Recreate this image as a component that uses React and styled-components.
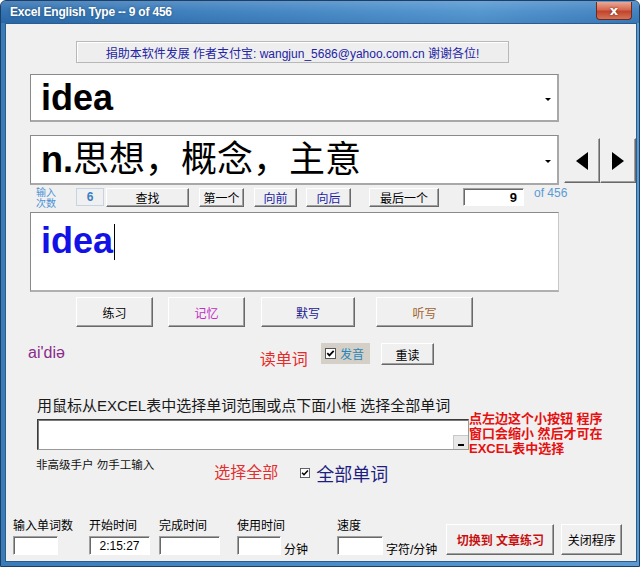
import React from "react";
import styled, { createGlobalStyle, css } from "styled-components";

const Global = createGlobalStyle`
  html, body { margin: 0; padding: 0; background: #fff; }
  body { font-family: "Liberation Sans", "Noto Sans CJK SC", sans-serif; }
  * { box-sizing: border-box; }
`;

const CJK = `"Liberation Sans", "Noto Sans CJK SC", sans-serif`;

const Win = styled.div`
  width: 640px;
  height: 567px;
  display: flex;
  flex-direction: column;
  background: linear-gradient(90deg, #3a7bb9 0%, #4d8fca 60%, #5c9bd2 100%);
  border: 1px solid #1d3f66;
  border-radius: 6px 6px 0 0;
  overflow: hidden;
`;

const TitleBar = styled.div`
  height: 22px;
  flex: none;
  display: flex;
  align-items: center;
  justify-content: space-between;
  padding: 0 7px 0 9px;
  background:
    linear-gradient(180deg, rgba(255,255,255,0.18) 0%, rgba(255,255,255,0.05) 45%, rgba(0,0,0,0.05) 100%),
    linear-gradient(90deg, #2a6cae 0%, #3c80c0 40%, #4f93cf 75%, #3a7dbd 100%);
`;

const Title = styled.span`
  color: #fff;
  font: bold 12px "Liberation Sans", sans-serif;
  letter-spacing: -0.2px;
  text-shadow: 0 0 3px rgba(0,0,0,0.35);
`;

const CloseBtn = styled.div`
  width: 36px;
  height: 18px;
  margin-top: -3px;
  border: 1px solid #6b2a22;
  border-top: none;
  border-radius: 0 0 4px 4px;
  background: linear-gradient(180deg, #e8a897 0%, #d8694f 45%, #c0452d 55%, #d57356 100%);
  display: flex;
  align-items: center;
  justify-content: center;
  color: #fff;
  font: bold 13px "DejaVu Sans", sans-serif;
  text-shadow: 0 0 2px #5a1a10;
`;

const Frame = styled.div`
  flex: 1;
  display: flex;
  padding: 0 4px 4px 4px;
`;

const Client = styled.div`
  flex: 1;
  background: #f0f0f0;
  border: 1px solid #2c5b8e;
  display: flex;
  flex-direction: column;
  font-family: ${CJK};
`;

const Row = styled.div`
  display: flex;
  align-items: ${(p) => p.$align || "flex-start"};
  margin-top: ${(p) => p.$mt || 0}px;
  padding-left: ${(p) => p.$pl || 0}px;
`;

const Banner = styled.div`
  width: 433px;
  height: 22px;
  border: 1px solid #b8b8b8;
  background: #eeeeee;
  box-shadow: inset 1px 1px 0 #fff;
  display: flex;
  align-items: center;
  justify-content: center;
  color: #2323a5;
  font-size: 12px;
`;

const sunken = css`
  background: #fff;
  border-top: 1px solid #a0a0a0;
  border-left: 1px solid #a0a0a0;
  border-right: 1px solid #fff;
  border-bottom: 1px solid #fff;
  box-shadow: inset 1px 1px 0 #696969;
`;

const raised = css`
  background: #f0f0f0;
  border-top: 1px solid #fff;
  border-left: 1px solid #fff;
  border-right: 1px solid #696969;
  border-bottom: 1px solid #696969;
  box-shadow: inset -1px -1px 0 #a0a0a0;
`;

const Combo = styled.div`
  width: 529px;
  height: ${(p) => p.$h}px;
  background: #fff;
  border-top: 1px solid #8a8a8a;
  border-left: 1px solid #8a8a8a;
  border-right: 2px solid #a8a8a8;
  border-bottom: 2px solid #a8a8a8;
  display: flex;
  align-items: center;
  padding: 0 6px 0 10px;
`;

const ComboText = styled.div`
  flex: 1;
  font-size: 36px;
  font-weight: ${(p) => (p.$bold ? 700 : 400)};
  color: #000;
  line-height: 1;
  white-space: nowrap;
  font-family: ${CJK};
`;

const Bold = styled.span`
  font-weight: 700;
`;

const DropArrow = styled.div`
  width: 0;
  height: 0;
  border-left: 3px solid transparent;
  border-right: 3px solid transparent;
  border-top: 3px solid #000;
  margin-top: 4px;
`;

const ArrowGroup = styled.div`
  display: flex;
  margin-left: 5px;
  margin-top: 3px;
  height: 45px;
`;

const ArrowBtn = styled.div`
  ${raised};
  width: 36px;
  height: 45px;
  display: flex;
  align-items: center;
  justify-content: center;
  border-top-color: #f0f0f0;
  border-left-color: #f0f0f0;
`;

const Tri = styled.div`
  width: 0;
  height: 0;
  border-top: 9px solid transparent;
  border-bottom: 9px solid transparent;
  ${(p) =>
    p.$dir === "left"
      ? css`border-right: 12px solid #000;`
      : css`border-left: 12px solid #000;`}
`;

const TinyLabel = styled.div`
  color: #4b92d6;
  font-size: 10px;
  line-height: 11px;
  width: 24px;
  margin-left: ${(p) => p.$ml || 0}px;
  margin-top: -1px;
`;

const CountBox = styled.div`
  width: 28px;
  height: 18px;
  margin-left: ${(p) => p.$ml || 0}px;
  border: 1px solid #c4d4e4;
  background: #f0f0f0;
  color: #3a7fc6;
  font: bold 12px "Liberation Sans", sans-serif;
  display: flex;
  align-items: center;
  justify-content: center;
`;

const Btn = styled.div`
  ${raised};
  width: ${(p) => p.$w}px;
  height: ${(p) => p.$h || 19}px;
  margin-left: ${(p) => p.$ml || 0}px;
  margin-top: ${(p) => p.$mt || 0}px;
  display: flex;
  align-items: center;
  justify-content: center;
  font-size: 12px;
  font-weight: ${(p) => (p.$bold ? 700 : 400)};
  color: ${(p) => p.$color || "#000"};
  flex: none;
`;

const NumInput = styled.div`
  ${sunken};
  width: 61px;
  height: 18px;
  margin-left: ${(p) => p.$ml || 0}px;
  display: flex;
  align-items: center;
  justify-content: flex-end;
  padding-right: 6px;
  font: bold 13px "Liberation Sans", sans-serif;
  color: #000;
`;

const OfText = styled.div`
  margin-left: ${(p) => p.$ml || 0}px;
  color: #5b9bd5;
  font: 12px "Liberation Sans", sans-serif;
  margin-top: -2px;
`;

const TextArea = styled.div`
  width: 529px;
  height: 80px;
  background: #fff;
  border-top: 1px solid #8a8a8a;
  border-left: 1px solid #8a8a8a;
  border-right: 1px solid #c8c8c8;
  border-bottom: 2px solid #b0b0b0;
  padding: 8px 0 0 10px;
  display: flex;
  align-items: flex-start;
`;

const TypedWord = styled.span`
  color: #1212e6;
  font: bold 36px "Liberation Sans", sans-serif;
  line-height: 40px;
`;

const Caret = styled.span`
  display: inline-block;
  width: 1px;
  height: 36px;
  margin-top: 3px;
  margin-left: 1px;
  background: #000;
`;

const Text = styled.div`
  color: ${(p) => p.$color || "#000"};
  font-size: ${(p) => p.$size || 12}px;
  font-weight: ${(p) => (p.$bold ? 700 : 400)};
  margin-left: ${(p) => p.$ml || 0}px;
  margin-top: ${(p) => p.$mt || 0}px;
  line-height: ${(p) => p.$lh || "normal"};
  white-space: nowrap;
  font-family: ${(p) => (p.$latin ? `"Liberation Sans", "DejaVu Sans", sans-serif` : CJK)};
`;

const CheckGroup = styled.div`
  display: flex;
  align-items: center;
  gap: 4px;
  margin-left: ${(p) => p.$ml || 0}px;
  margin-top: ${(p) => p.$mt || 0}px;
  padding: ${(p) => (p.$shaded ? "0 6px 0 4px" : "0")};
  height: ${(p) => (p.$shaded ? "21px" : "auto")};
  background: ${(p) => (p.$shaded ? "#d4d0c8" : "transparent")};
`;

const CheckBox = ({ size = 11 }) => (
  <svg width={size} height={size} viewBox="0 0 11 11">
    <rect x="0.5" y="0.5" width="10" height="10" fill="#fff" stroke="#555" />
    <path d="M2.3 5.2 L4.4 7.4 L8.7 2.8" fill="none" stroke="#000" strokeWidth="1.7" />
  </svg>
);

const WideInput = styled.div`
  width: 432px;
  height: 31px;
  margin-left: 31px;
  margin-top: 7px;
  background: #fff;
  border: 1px solid #3a3a3a;
  border-right-color: #9a9a9a;
  border-bottom-color: #9a9a9a;
  box-shadow: inset 1px 1px 0 #7a7a7a;
  display: flex;
  justify-content: flex-end;
  align-items: flex-end;
`;

const MiniBtn = styled.div`
  width: 15px;
  height: 14px;
  background: #e8e8e8;
  border-left: 1px solid #c8c8c8;
  border-top: 1px solid #c8c8c8;
  display: flex;
  align-items: flex-end;
  justify-content: center;
  padding-bottom: 3px;
`;

const MiniBar = styled.div`
  width: 6px;
  height: 2px;
  background: #000;
`;

const Field = styled.div`
  display: flex;
  flex-direction: column;
  margin-left: ${(p) => p.$ml || 0}px;
`;

const FieldLabel = styled.div`
  font-size: 12px;
  color: #000;
  line-height: 14px;
  height: 17px;
  white-space: nowrap;
`;

const FieldRow = styled.div`
  display: flex;
  align-items: flex-end;
`;

const SmallInput = styled.div`
  ${sunken};
  width: ${(p) => p.$w}px;
  height: 19px;
  display: flex;
  align-items: center;
  justify-content: center;
  font: 12px "Liberation Sans", sans-serif;
  color: #000;
`;

const Unit = styled.div`
  font-size: 12px;
  margin-left: 3px;
  margin-bottom: -2px;
  white-space: nowrap;
`;

export default function App() {
  return (
    <>
      <Global />
      <Win>
        <TitleBar>
          <Title>Excel English Type -- 9 of 456</Title>
          <CloseBtn>x</CloseBtn>
        </TitleBar>
        <Frame>
          <Client>
            <Row $mt={17} $pl={70}>
              <Banner>捐助本软件发展 作者支付宝: wangjun_5686@yahoo.com.cn 谢谢各位!</Banner>
            </Row>

            <Row $mt={11} $pl={24}>
              <Combo $h={48}>
                <ComboText $bold>idea</ComboText>
                <DropArrow />
              </Combo>
            </Row>

            <Row $mt={13} $pl={24}>
              <Combo $h={50}>
                <ComboText>
                  <Bold>n.</Bold>思想，概念，主意
                </ComboText>
                <DropArrow />
              </Combo>
              <ArrowGroup>
                <ArrowBtn>
                  <Tri $dir="left" />
                </ArrowBtn>
                <ArrowBtn>
                  <Tri $dir="right" />
                </ArrowBtn>
              </ArrowGroup>
            </Row>

            <Row $mt={3}>
              <TinyLabel $ml={30}>
                输入
                <br />
                次数
              </TinyLabel>
              <CountBox $ml={16}>6</CountBox>
              <Btn $w={83} $ml={2}>查找</Btn>
              <Btn $w={45} $ml={10}>第一个</Btn>
              <Btn $w={43} $ml={10} $color="#1c1ca8">向前</Btn>
              <Btn $w={45} $ml={9} $color="#1c1ca8">向后</Btn>
              <Btn $w={70} $ml={18}>最后一个</Btn>
              <NumInput $ml={24}>9</NumInput>
              <OfText $ml={10}>of 456</OfText>
            </Row>

            <Row $mt={3} $pl={24}>
              <TextArea>
                <TypedWord>idea</TypedWord>
                <Caret />
              </TextArea>
            </Row>

            <Row $mt={5}>
              <Btn $w={77} $h={30} $ml={70}>练习</Btn>
              <Btn $w={77} $h={30} $ml={15} $color="#c42cc4">记忆</Btn>
              <Btn $w={94} $h={30} $ml={16} $color="#20208e">默写</Btn>
              <Btn $w={97} $h={30} $ml={21} $color="#a0622c">听写</Btn>
            </Row>

            <Row $mt={16}>
              <Text $ml={22} $mt={1} $size={16} $color="#8a2a8c" $latin>
                ai'diə
              </Text>
              <Text $ml={195} $mt={3} $size={16} $color="#e62a2a">
                读单词
              </Text>
              <CheckGroup $ml={13} $shaded>
                <CheckBox />
                <Text $size={12} $color="#2a86b8">发音</Text>
              </CheckGroup>
              <Btn $w={53} $h={22} $ml={11}>重读</Btn>
            </Row>

            <Row $mt={24}>
              <Text $ml={31} $size={15} $color="#1a1a1a">
                用鼠标从EXCEL表中选择单词范围或点下面小框 选择全部单词
              </Text>
            </Row>

            <Row $mt={-3}>
              <WideInput>
                <MiniBtn>
                  <MiniBar />
                </MiniBtn>
              </WideInput>
              <Text $size={13} $bold $color="#e61010" $lh="15px" $mt={-1}>
                点左边这个小按钮 程序
                <br />
                窗口会缩小 然后才可在
                <br />
                EXCEL表中选择
              </Text>
            </Row>

            <Row $mt={0}>
              <Text $ml={30} $size={11.5} $color="#111">
                非高级手户 勿手工输入
              </Text>
              <Text $ml={60} $mt={3} $size={16} $color="#e23030">
                选择全部
              </Text>
              <CheckGroup $ml={22} $mt={4}>
                <CheckBox size={10} />
                <Text $size={18} $color="#1e1e82" $ml={2}>
                  全部单词
                </Text>
              </CheckGroup>
            </Row>

            <Row $mt={33} $align="flex-end">
              <Field $ml={7}>
                <FieldLabel>输入单词数</FieldLabel>
                <SmallInput $w={45} />
              </Field>
              <Field $ml={16}>
                <FieldLabel>开始时间</FieldLabel>
                <SmallInput $w={61}>2:15:27</SmallInput>
              </Field>
              <Field $ml={9}>
                <FieldLabel>完成时间</FieldLabel>
                <SmallInput $w={61} />
              </Field>
              <Field $ml={17}>
                <FieldLabel>使用时间</FieldLabel>
                <FieldRow>
                  <SmallInput $w={44} />
                  <Unit>分钟</Unit>
                </FieldRow>
              </Field>
              <Field $ml={29}>
                <FieldLabel>速度</FieldLabel>
                <FieldRow>
                  <SmallInput $w={46} />
                  <Unit>字符/分钟</Unit>
                </FieldRow>
              </Field>
              <Btn $w={108} $h={31} $ml={9} $bold $color="#c81010">
                切换到 文章练习
              </Btn>
              <Btn $w={61} $h={31} $ml={7}>关闭程序</Btn>
            </Row>
          </Client>
        </Frame>
      </Win>
    </>
  );
}
